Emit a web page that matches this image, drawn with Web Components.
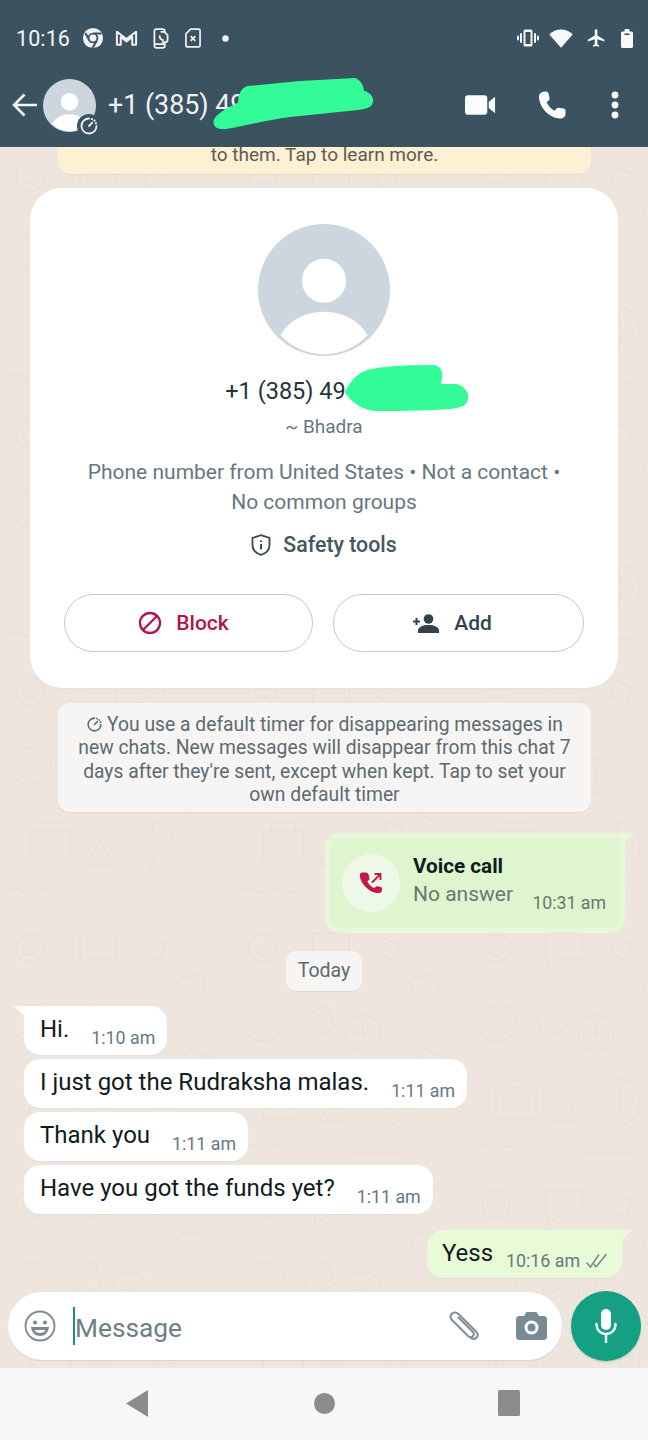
<!DOCTYPE html>
<html lang="en"><head><meta charset="utf-8"><title>Chat</title>
<style>
html,body{margin:0;padding:0}
body{width:648px;height:1440px;overflow:hidden;font-family:Roboto,"Liberation Sans",sans-serif;display:flex;flex-direction:column;background:#eee6de}
</style></head><body>
<wa-header></wa-header>
<wa-chat>
  <wa-banner>to them. Tap to learn more.</wa-banner>
  <wa-profile-card></wa-profile-card>
  <wa-notice>You use a default timer for disappearing messages in new chats. New messages will disappear from this chat 7 days after they're sent, except when kept. Tap to set your own default timer</wa-notice>
  <wa-call-bubble></wa-call-bubble>
  <wa-date-chip>Today</wa-date-chip>
  <wa-bubble time="1:10 am" tail style="margin-top:15px">Hi.</wa-bubble>
  <wa-bubble time="1:11 am" style="margin-top:4px">I just got the Rudraksha malas.</wa-bubble>
  <wa-bubble time="1:11 am" style="margin-top:4px">Thank you</wa-bubble>
  <wa-bubble time="1:11 am" style="margin-top:4px">Have you got the funds yet?</wa-bubble>
  <wa-bubble time="10:16 am" out tail style="margin-top:16px">Yess</wa-bubble>
  <wa-composer></wa-composer>
</wa-chat>
<wa-navbar></wa-navbar>
<script>
function def(name, css, html, init){
  customElements.define(name, class extends HTMLElement{
    constructor(){super();this.attachShadow({mode:'open'}).innerHTML='<style>'+css+'</style>'+(typeof html==='function'?html(this):html);}
    connectedCallback(){if(init)init(this);}
  });
}
const TIMER=(s,c)=>`<svg width="${s}" height="${s}" viewBox="0 0 24 24" fill="none" stroke="${c}" stroke-width="2.2" stroke-linecap="round"><path d="M12 3a9 9 0 1 0 9 9"/><path d="M15.500 3.800v.01M18.600 5.600v.01M20.400 8.700v.01" stroke-width="2.600"/><path d="M12 12l4-4"/></svg>`;
const PERSON=`<circle cx="50" cy="50" r="50" fill="#cdd6de"/><circle cx="50" cy="43" r="16.700" fill="#fff"/><path d="M17 84C24 72.500 37 66.500 50 66.500S76 72.500 83 84A44.200 44.200 0 0 1 17 84Z" fill="#fff"/>`;

def('wa-scribble',`:host{position:absolute;left:0;top:0;display:block;pointer-events:none}svg{display:block;overflow:visible}`,
  h=>`<svg width="1" height="1"><path d="${h.getAttribute('d')}" fill="#33fb97" stroke="#33fb97" stroke-width="4" stroke-linejoin="round"/></svg>`);

def('wa-header',`
:host{display:block;flex:none;background:#3b5261;color:#fff;position:relative;height:147px}
.status{height:76px;display:flex;align-items:center;padding:0 15px 0 16px;box-sizing:border-box;position:relative}
.time{font-size:21.500px;letter-spacing:.1px;width:53px;margin-right:13px;font-weight:400;color:#f4f6f7}
svg{display:block;flex:none}
.spacer{flex:1}
.bar{height:71px;display:flex;align-items:center;padding:0 0 13px 12px;box-sizing:border-box}
.av{position:relative;width:53px;height:53px;margin-left:6px;flex:none}
.badge{position:absolute;right:-5px;bottom:-6px;width:24px;height:24px;border-radius:50%;background:#3b5261;display:flex;align-items:center;justify-content:center}
.title{font-size:26.800px;margin-left:12px;color:#eef1f3;white-space:nowrap;width:300px}
`,`
<div class="status">
 <span class="time">10:16</span>
 <svg width="22" height="22" viewBox="0 0 24 24" style="margin-right:11px"><circle cx="12" cy="12" r="11" fill="#f1f3f4"/><path d="M12 7.200h9.300M8 14.400 3.600 6.500M16.200 14.600 11.500 22.800" stroke="#3b5261" stroke-width="2.200"/><circle cx="12" cy="12" r="4.800" fill="#f1f3f4" stroke="#3b5261" stroke-width="2"/></svg>
 <svg width="23" height="18" viewBox="0 0 24 18" fill="none" stroke="#f1f3f4" stroke-width="2.100" stroke-linejoin="round" style="margin-right:15px"><path d="M2 16V2.500L12 10 22 2.500V16h-4V8l-6 4.500L6 8v8Z"/></svg>
 <svg width="16" height="21" viewBox="0 0 17 22" fill="none" stroke="#f1f3f4" stroke-width="1.900" style="margin-right:16px"><rect x="1.500" y="1" width="11" height="20" rx="2"/><path d="M1.500 17h11" /><path d="M8 4h4l3.500 3.500v5A2.500 2.500 0 0 1 13 15H9.500" fill="#3b5261"/><path d="M7 7.500c0 3 1.500 5 4.500 5.500"/></svg>
 <svg width="16" height="20" viewBox="0 0 17 21" fill="none" stroke="#f1f3f4" stroke-width="1.800" stroke-linejoin="round" style="margin-right:21px"><path d="M6 1h8.500a1.500 1.500 0 0 1 1.500 1.500v16a1.500 1.500 0 0 1-1.500 1.500h-12A1.500 1.500 0 0 1 1 18.500V6Z"/><path d="M6 8.500l5 5M11 8.500l-5 5"/></svg>
 <svg width="7" height="7" viewBox="0 0 7 7"><circle cx="3.500" cy="3.500" r="3.200" fill="#f1f3f4"/></svg>
 <span class="spacer"></span>
 <svg width="22" height="18" viewBox="0 0 22 18" fill="#f1f3f4" style="margin-right:10px"><path fill-rule="evenodd" d="M6.500 2A1.500 1.500 0 0 1 8 .5h6A1.500 1.500 0 0 1 15.500 2v14a1.500 1.500 0 0 1-1.500 1.500H8A1.500 1.500 0 0 1 6.500 16ZM8.500 3v12h5V3Z"/><rect x="3" y="4" width="2" height="10" rx="1"/><rect x="17" y="4" width="2" height="10" rx="1"/><rect x="0" y="6.500" width="2" height="5" rx="1"/><rect x="20" y="6.500" width="2" height="5" rx="1"/></svg>
 <svg width="24" height="19" viewBox="0 0 24 19" fill="#f7f8f9" style="margin-right:13px"><path d="M12 18.800 .3 5.500C3.500 2.500 7.500.6 12 .6s8.500 1.900 11.700 4.900Z"/></svg>
 <svg width="21" height="22" viewBox="0 0 24 24" fill="#f7f8f9" style="margin-right:14px"><path d="M21 16v-2l-8-5V3.500a1.500 1.500 0 0 0-3 0V9l-8 5v2l8-2.500V19l-2 1.500V22l3.500-1 3.500 1v-1.500L13 19v-5.500Z"/></svg>
 <svg width="12" height="19" viewBox="0 0 12 19" fill="#f7f8f9"><path d="M3.500 2.500V1a1 1 0 0 1 1-1h3a1 1 0 0 1 1 1v1.500h2a1.500 1.500 0 0 1 1.500 1.500v13.500A1.500 1.500 0 0 1 10.500 19h-9A1.500 1.500 0 0 1 0 17.500V4a1.500 1.500 0 0 1 1.500-1.500Z"/><rect x="3.500" y="4.500" width="5" height="1.500" fill="#3b5261"/></svg>
</div>
<div class="bar">
 <svg width="25" height="24" viewBox="0 0 25 24" fill="none" stroke="#f4f6f7" stroke-width="2.600"><path d="M25 12H2.500M12.500 1.500 2 12l10.500 10.500"/></svg>
 <div class="av"><svg width="53" height="53" viewBox="0 0 100 100">${PERSON}</svg>
 <span class="badge">${TIMER(20,'#f1f3f4')}</span></div>
 <span class="title">+1 (385) 49</span>
 <span class="spacer" style="flex:1"></span>
 <svg width="31" height="20" viewBox="0 0 32 20" fill="#fbfcfc" style="margin-right:42px"><rect x="0" y="0" width="23" height="20" rx="3"/><path d="M24.500 7 31 1.500v17L24.500 13Z"/></svg>
 <svg width="28" height="28" viewBox="0 0 28 28" fill="#fbfcfc" style="margin-right:45px"><path d="M7.500.500c-2 0-6.500 1-6.500 5 0 11 10.500 22 21.500 22 3.500 0 5-2.500 5-5v-3c0-1-1-1.800-2-2l-4.800-.8c-1-.2-1.800.2-2.400 1l-1.600 2c-3.500-1.700-6.500-4.900-8-8.500l2-1.600c.8-.6 1.100-1.500.9-2.400l-1-4.500c-.2-1-1-2.200-3.100-2.200Z"/></svg>
 <svg width="8" height="28" viewBox="0 0 8 28" fill="#fbfcfc" style="margin-right:29px"><circle cx="4" cy="4" r="3.400"/><circle cx="4" cy="14" r="3.400"/><circle cx="4" cy="24" r="3.400"/></svg>
</div>
<wa-scribble d="M216 120 C219 114 230 109 240 104 C240 96 242 90 248 88 L300 83 L355 80 C360 82 362 88 362 92 C368 94 372 97 371 102 C370 106 365 107 358 108 L290 115 C265 118 245 124 226 127 C218 128 214 125 216 120Z"></wa-scribble>
`);

def('wa-chat',`
:host{display:flex;flex-direction:column;flex:1;min-height:0;position:relative;overflow:hidden;background:#eee6de}
.wall{position:absolute;inset:0;width:100%;height:100%;z-index:0}
.flow{position:relative;z-index:1;display:flex;flex-direction:column;flex:1}
::slotted(wa-composer){margin-top:auto}
`,`
<svg class="wall"><defs><pattern id="d" width="233" height="257" patternUnits="userSpaceOnUse"><g fill="none" stroke="#e9e0d6" stroke-width="1.400" stroke-linecap="round" stroke-linejoin="round">
<circle cx="30" cy="30" r="14"/><path d="M23 34c4 4 10 4 14 0M24 25v.1M36 25v.1"/>
<path d="M80 15h36v26H92l-10 10V41h-2Z"/><path d="M150 20l16 6-6 16-16-6ZM190 60c10-8 22 2 12 14l-10 10-12-10c-8-10 2-20 10-14Z"/>
<path d="M20 90c20-12 40 8 26 26-8 10-26 10-32-2M70 100l24-14 8 24-24 10Z"/><circle cx="130" cy="115" r="18"/><path d="M122 115h16M130 107v16"/>
<path d="M30 170h40v30H30ZM38 170v-8h24v8M150 160c14 0 24 10 24 24s-10 24-24 24c6-14 6-34 0-48ZM100 180l14 24h-28Z"/><path d="M10 230c10-8 16 8 26 0s16 8 26 0M120 235h50M190 130l20 10-10 20-20-10Z"/>
</g></pattern></defs><rect width="100%" height="100%" fill="url(#d)"/></svg>
<div class="flow"><slot></slot></div>`);

def('wa-banner',`:host{display:block;align-self:flex-start;margin-left:58px;width:533px;height:27px;box-sizing:border-box;background:#fdf0d3;border-radius:0 0 12px 12px;box-shadow:0 1px 1px #e3dacb;text-align:center;font-size:19px;line-height:16px;color:#605b52}`,`<slot></slot>`);

def('wa-pill',`:host{display:flex;flex:1 1 0;min-width:0;height:58px;box-sizing:border-box;border:1.500px solid #c6cacb;border-radius:29px;align-items:center;justify-content:center;gap:var(--g,14px);padding-right:var(--p,10px);font-size:21px;font-weight:500;color:var(--c,#3b4a54)}`,`<slot name="i"></slot><slot></slot>`);

def('wa-profile-card',`
:host{display:flex;flex-direction:column;align-items:center;margin:14px 0 0 30px;width:588px;height:500px;box-sizing:border-box;background:#fff;border-radius:32px;padding-top:36px;position:relative;box-shadow:0 1px 1px #e6ddd3;color:#3b4a54}
svg{display:block;flex:none}
.name{font-size:23.500px;line-height:30px;margin-top:20px;color:#27343b;padding-right:77px}
.sub{font-size:19px;line-height:24px;margin-top:9px;color:#667781}
.info{font-size:21px;line-height:30px;margin-top:18px;color:#667781;text-align:center;white-space:nowrap}
.safety{display:flex;align-items:center;gap:12px;font-size:21.300px;font-weight:500;line-height:28px;margin-top:14px;color:#46565f}
.row{display:flex;gap:20px;width:520px;margin-top:35px}
wa-scribble{position:absolute}
`,`
<svg width="132" height="132" viewBox="0 0 100 100">${PERSON}</svg>
<div class="name">+1 (385) 49</div>
<div class="sub">~ Bhadra</div>
<div class="info">Phone number from United States • Not a contact •<br>No common groups</div>
<div class="safety"><svg width="20" height="22" viewBox="0 0 20 22" fill="none" stroke="#3b4a54" stroke-width="1.800"><path d="M10 1.200 18.500 4v7c0 5-3.500 8.300-8.500 9.800C5 19.300 1.500 16 1.500 11V4Z"/><path d="M10 10v5.500M10 6.500v1.600" stroke-width="2"/></svg>Safety tools</div>
<div class="row">
 <wa-pill style="--c:#b3134f;--p:10px"><svg slot="i" width="24" height="24" viewBox="0 0 24 24" fill="none" stroke="#b3134f" stroke-width="2.300"><circle cx="12" cy="12" r="10"/><path d="M5 19 19 5"/></svg>Block</wa-pill>
 <wa-pill style="--c:#33434d;--p:12px"><svg slot="i" width="27" height="19" viewBox="0 0 27 19" fill="#33434d"><circle cx="15.500" cy="5" r="4.800"/><path d="M5 19v-2.500C5 13 10 11 15.500 11S26 13 26 16.500V19Z"/><path d="M0 6.500h7v2H0ZM2.500 4h2v7h-2Z"/></svg>Add</wa-pill>
</div>
<wa-scribble style="left:-30px;top:-188px" d="M347 392 C352 382 358 375 368 372 C385 367 415 367 434 367 C440 368 441 374 440 379 C439 383 438 385 440 386 L456 386 C463 388 467 393 466 399 C465 404 460 406 450 407 C420 409 395 409 375 409 C362 408 352 400 347 392Z"></wa-scribble>
`);

def('wa-notice',`
:host{display:block;margin:15px 0 0 58px;width:533px;height:109px;box-sizing:border-box;background:#f6f5f3;border-radius:12px;padding:9.500px 14px 0;text-align:center;font-size:19.300px;line-height:23.500px;color:#5d6a71;box-shadow:0 1px 1px #e3dacf}
svg{display:inline-block;vertical-align:-2px;margin-right:4px}
`,`${TIMER(17,'#5d6a71')}<slot></slot>`);

def('wa-call-bubble',`
:host{display:flex;align-items:flex-start;margin:21px 0 0 325px;width:300px;height:100px;box-sizing:border-box;background:#dff5cf;border:5px solid #e6f8d8;border-radius:14px 0 14px 14px;position:relative;color:#111b21}
:host::after{content:"";position:absolute;right:-14px;top:-5px;width:14px;height:14px;background:#e6f8d8;clip-path:polygon(0 0,100% 0,0 100%)}
.ic{width:58px;height:58px;border-radius:50%;background:#eef8e6;margin:16px 0 0 12px;display:flex;align-items:center;justify-content:center;flex:none}
.t{margin:14px 0 0 13px;font-size:21px;line-height:28px}
b{font-weight:700;font-size:20.700px;display:block;color:#111b21}
.s{color:#667a70;font-size:21px}
.time{position:absolute;right:14px;bottom:15px;font-size:17.700px;color:#667a70}
`,`<div class="ic"><svg width="26" height="26" viewBox="0 0 26 26"><path d="M2 5c-1.500 8 10 20 19 19 2 0 3-1.500 3-3v-1.500c0-1-.8-1.500-1.600-1.700l-3.400-.6c-.7-.1-1.300.1-1.700.7l-1 1.300c-3-1.500-5.700-4-7-7l1.500-1.100c.6-.4.800-1 .7-1.700L10.700 6C10.500 5 9.800 3.500 8 3.500H5C3.500 3.500 2.200 4 2 5Z" fill="#c5164f" transform="translate(0 -1)"/><path d="M14 12.500 22 4.500M16.500 4h6v6" fill="none" stroke="#c5164f" stroke-width="1.900"/></svg></div>
<div class="t"><b>Voice call</b><span class="s">No answer</span></div><span class="time">10:31 am</span>`);

def('wa-date-chip',`:host{display:block;align-self:flex-start;margin:18px 0 0 286px;width:76px;height:40px;box-sizing:border-box;background:#f6f5f3;border-radius:10px;text-align:center;font-size:19.500px;line-height:39px;color:#5d6a71;box-shadow:0 1px 1px #e3dacf}`,`<slot></slot>`);

def('wa-bubble',`
:host{display:flex;align-self:flex-start;align-items:flex-start;height:49px;box-sizing:border-box;margin-left:24px;background:#fff;border-radius:16px;padding:0 12px 0 16px;position:relative;font-size:24px;color:#111b21;box-shadow:0 1px 1px #e6ddd3;white-space:nowrap}
:host([tail]){border-top-left-radius:0}
:host([tail])::before{content:"";position:absolute;left:-10px;top:0;width:10px;height:10px;background:#fff;clip-path:polygon(0 0,100% 0,100% 100%)}
:host([out]){align-self:flex-end;margin:0 26px 0 0;background:#e8fbd6;height:48px;border-radius:16px 0 16px 16px;padding:0 12px 0 15px}
:host([out])::before{left:auto;right:-10px;top:0;background:#e8fbd6;clip-path:polygon(0 0,100% 0,0 100%)}
:host([out]) .time{margin-left:13px}
.m{line-height:46px}
.time{align-self:flex-end;margin:0 0 5px 22px;font-size:17.800px;line-height:24px;color:#667781;display:flex;align-items:center;gap:5px}
svg{display:block}
`,h=>`<span class="m"><slot></slot></span><span class="time">${h.getAttribute('time')}${h.hasAttribute('out')?'<svg width="25" height="16" viewBox="0 0 25 16" fill="none" stroke="#73838c" stroke-width="1.400"><path d="M1.500 9.500 5.500 14 14 1.500M11 14 21.500 1"/><path d="M9 11l2 3"/></svg>':''}</span>`);

def('wa-composer',`
:host{display:flex;align-items:center;gap:9px;padding:0 7px 7px 8px;flex:none}
.in{display:flex;align-items:center;width:554px;height:68px;background:#fff;border-radius:34px;box-shadow:0 1px 1px #d9d2c8;box-sizing:border-box;padding:0 15px 0 16px;flex:none}
.caret{width:2px;height:38px;background:#1c8f7c;margin:0 0 0 17px;flex:none}
.ph{font-size:26.300px;color:#6f7d85;flex:1;line-height:34px;padding-top:3px}
.mic{width:70px;height:70px;border-radius:50%;background:#15a083;display:flex;align-items:center;justify-content:center;flex:none;box-shadow:0 1px 2px #b5c9bd}
svg{display:block;flex:none}
`,`<div class="in">
<svg width="32" height="32" viewBox="0 0 32 32" fill="none" stroke="#7b8890" stroke-width="1.800"><circle cx="16" cy="16" r="14.500"/><circle cx="11" cy="12.500" r="2" fill="#7b8890" stroke="none"/><circle cx="21" cy="12.500" r="2" fill="#7b8890" stroke="none"/><path d="M8 18h16c-.5 4.500-4 7-8 7s-7.500-2.500-8-7Z" fill="#7b8890" stroke="#7b8890"/><path d="M10.500 20h11c-1 2-3 3-5.500 3s-4.500-1-5.500-3Z" fill="#fff" stroke="none"/></svg>
<span class="caret"></span><span class="ph">Message</span>
<svg width="32" height="30" viewBox="0 0 32 30" fill="none" stroke="#80909a" stroke-width="2.100" stroke-linecap="round" style="margin-right:35px"><path d="M27 27c2.500-2 2-4.500 0-6.500L10 3.500C7.500 1 4.500 1 2.800 2.800S1 7 3.500 9.500L19 25c1.500 1.500 3.500 1.500 4.800.2s1.200-3.200-.3-4.700L9.500 6.500"/><path d="M27 27c-1.200 1.200-3 1-4.800.2"/></svg>
<svg width="31" height="28" viewBox="0 0 31 28"><path fill="#7a8a94" fill-rule="evenodd" d="M10.500 0h10L23 4h4.500A3.500 3.500 0 0 1 31 7.500v17a3.500 3.500 0 0 1-3.500 3.500h-24A3.500 3.500 0 0 1 0 24.500v-17A3.500 3.500 0 0 1 3.500 4H8Z"/><circle cx="15.500" cy="15.500" r="5.500" fill="none" stroke="#fff" stroke-width="3"/></svg>
</div>
<div class="mic"><svg width="22" height="34" viewBox="0 0 22 34" fill="none"><rect x="6" y="0" width="10" height="21" rx="5" fill="#fff"/><path d="M1.500 15c0 6 4 10 9.500 10s9.500-4 9.500-10M11 25v8.500" stroke="#fff" stroke-width="2.400" stroke-linecap="round"/></svg></div>`);

def('wa-navbar',`:host{display:flex;flex:none;height:72px;background:#f5f7f8;align-items:center;padding:0 128px 2px 126px;box-sizing:border-box;justify-content:space-between}svg{display:block}`,
`<svg width="22" height="27" viewBox="0 0 22 27"><path d="M22 0v27L0 13.500Z" fill="#8c8c8c"/></svg>
<svg width="21" height="21" viewBox="0 0 21 21" style="margin-left:2px"><circle cx="10.500" cy="10.500" r="10.500" fill="#8c8c8c"/></svg>
<svg width="22" height="26" viewBox="0 0 22 26"><rect width="22" height="26" rx="1.500" fill="#8c8c8c"/></svg>`);
</script>
</body></html>
